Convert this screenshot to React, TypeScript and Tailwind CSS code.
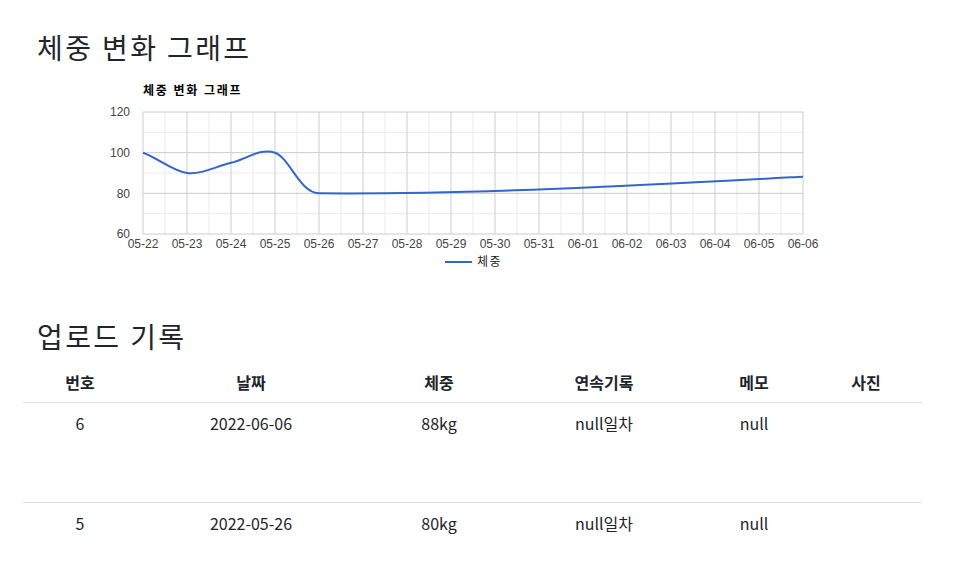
import React from "react";

const dates = ["05-22","05-23","05-24","05-25","05-26","05-27","05-28","05-29","05-30","05-31","06-01","06-02","06-03","06-04","06-05","06-06"];

function Chart() {
  const x0 = 143, x1 = 803, yTop = 112, yBot = 234;
  const step = (x1 - x0) / 15;
  const majorY = [112, 152.67, 193.33, 234];
  const minorY = [132.33, 173, 213.67];
  return (
    <svg width={760} height={255} className="block ml-[77px]" style={{ fontFamily: '"Liberation Sans", Arial, "Noto Sans CJK KR", sans-serif' }}>
      <g transform="translate(-100,-65)">
        <text x={143} y={95} fontSize={12} fontWeight="bold" fill="#000" letterSpacing={1.7}>체중 변화 그래프</text>
        {minorY.map((y) => (
          <line key={"my" + y} x1={x0} x2={x1} y1={y} y2={y} stroke="#ebebeb" strokeWidth={1} />
        ))}
        {dates.slice(0, 15).map((_, i) => (
          <line key={"mx" + i} x1={x0 + step * i + step / 2} x2={x0 + step * i + step / 2} y1={yTop} y2={yBot} stroke="#ebebeb" strokeWidth={1} />
        ))}
        {majorY.map((y) => (
          <line key={"Y" + y} x1={x0} x2={x1} y1={y} y2={y} stroke="#cccccc" strokeWidth={1} />
        ))}
        {dates.map((_, i) => (
          <line key={"X" + i} x1={x0 + step * i} x2={x0 + step * i} y1={yTop} y2={yBot} stroke="#cccccc" strokeWidth={1} />
        ))}
        {[["120", 116], ["100", 157], ["80", 198], ["60", 238]].map(([t, y]) => (
          <text key={t as string} x={130} y={y as number} fontSize={12} textAnchor="end" fill="#444">{t}</text>
        ))}
        {dates.map((d, i) => (
          <text key={d} x={x0 + step * i} y={248} fontSize={12} textAnchor="middle" fill="#444">{d}</text>
        ))}
        <path
          d="M143,152.7 C157.7,157.8 172.3,171.3 187,173 C201.7,174.7 216.3,166.2 231,162.8 C245.7,159.4 260.3,147.6 275,152.7 C289.7,157.8 300,193.3 319,193.3 C480,194.5 650,185 803,176.7"
          fill="none"
          stroke="#3366cc"
          strokeWidth={2}
        />
        <line x1={445} x2={472} y1={262} y2={262} stroke="#3366cc" strokeWidth={2} />
        <text x={477} y={266} fontSize={12} fill="#222" letterSpacing={1.5}>체중</text>
      </g>
    </svg>
  );
}

const rows = [
  { no: "6", date: "2022-06-06", w: "88kg", streak: "null일차", memo: "null" },
  { no: "5", date: "2022-05-26", w: "80kg", streak: "null일차", memo: "null" },
];

const cols = "grid grid-cols-[114px_228px_148px_182px_118px_106px_1fr]";

export default function App() {
  return (
    <div
      className="w-[960px] h-[576px] overflow-hidden bg-white text-[#212529]"
      style={{ fontFamily: '"Noto Sans CJK KR", "Noto Sans", sans-serif' }}
    >
      <div className="pl-[23px] w-[922px]">
        <h3 className="pt-[31px] pl-[14px] text-[28px] leading-[1.2] font-normal tracking-[2.4px]">체중 변화 그래프</h3>
        <Chart />
        <h3 className="pl-[14px] text-[28px] leading-[1.2] font-normal mb-[9px] tracking-[2.4px]">업로드 기록</h3>
        <div className="text-base">
          <div className={`${cols} border-b border-[#dee2e6] font-bold text-center leading-6 py-2`}>
            <div>번호</div>
            <div>날짜</div>
            <div>체중</div>
            <div>연속기록</div>
            <div>메모</div>
            <div>사진</div>
            <div></div>
          </div>
          {rows.map((r) => (
            <div key={r.no} className={`${cols} border-b border-[#dee2e6] text-center leading-6 pt-2 h-[100px]`}>
              <div>{r.no}</div>
              <div>{r.date}</div>
              <div>{r.w}</div>
              <div>{r.streak}</div>
              <div>{r.memo}</div>
              <div></div>
              <div></div>
            </div>
          ))}
        </div>
      </div>
    </div>
  );
}
